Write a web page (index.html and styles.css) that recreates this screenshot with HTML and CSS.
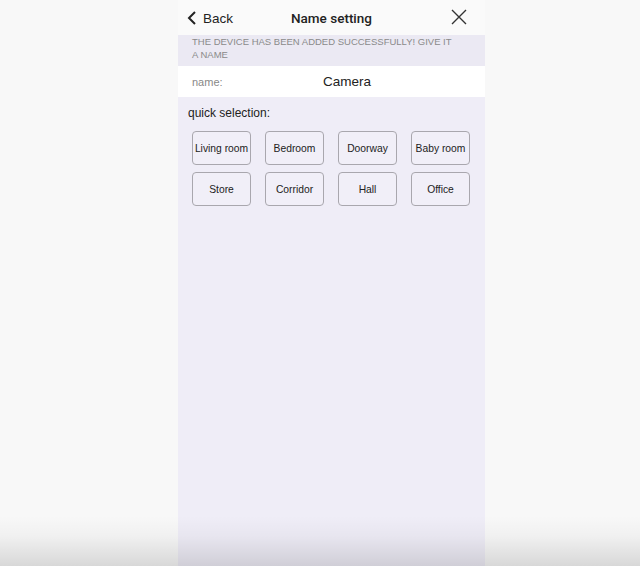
FILE: index.html
```html
<!DOCTYPE html>
<html lang="en">
<head>
  <meta charset="UTF-8">
  <meta name="viewport" content="width=device-width, initial-scale=1.0">
  <title>Name setting</title>
  <link rel="stylesheet" href="styles.css">
</head>
<body>
  <div class="phone">
    <div class="topbar">
      <div class="back">
        <svg width="10" height="14" viewBox="0 0 10 14"><path d="M8 1 L2 7 L8 13" fill="none" stroke="#222" stroke-width="2"/></svg>
        <span>Back</span>
      </div>
      <div class="title">Name setting</div>
      <div class="close">
        <svg width="16" height="16" viewBox="0 0 16 16"><path d="M1 1 L15 15 M15 1 L1 15" fill="none" stroke="#333" stroke-width="1.4"/></svg>
      </div>
    </div>
    <div class="notice">THE DEVICE HAS BEEN ADDED SUCCESSFULLY! GIVE IT A NAME</div>
    <div class="name-row">
      <span class="name-label">name:</span>
      <span class="name-value">Camera</span>
    </div>
    <div class="quick">
      <div class="quick-title">quick selection:</div>
      <div class="grid">
        <button>Living room</button>
        <button>Bedroom</button>
        <button>Doorway</button>
        <button>Baby room</button>
        <button>Store</button>
        <button>Corridor</button>
        <button>Hall</button>
        <button>Office</button>
      </div>
    </div>
  </div>
</body>
</html>
```

FILE: styles.css
```css
html, body { height: 100%; }
body { margin: 0; background: #f8f8f8; font-family: "Liberation Sans", Arial, sans-serif; color: #222; position: relative; overflow: hidden; }
body::after { content: ""; position: absolute; left: 0; right: 0; bottom: 0; height: 50px; background: linear-gradient(to bottom, rgba(0,0,0,0) 0%, rgba(0,0,0,0.03) 40%, rgba(0,0,0,0.13) 100%); pointer-events: none; }
.phone { margin-left: 178px; width: 307px; height: 100%; background: #efedf7; display: flex; flex-direction: column; }
.topbar { height: 35px; background: #fafafa; display: flex; align-items: center; position: relative; }
.back { display: flex; align-items: center; gap: 6px; margin-left: 9px; font-size: 13.5px; margin-top: 1px; }
.title { position: absolute; left: 0; right: 0; text-align: center; font-family: Roboto, "Liberation Sans", sans-serif; font-size: 13.5px; font-weight: 500; pointer-events: none; margin-top: 1px; padding-left: 0; }
.close { margin-left: auto; margin-right: 18px; display: flex; margin-top: -1px; }
.notice { background: #ebe9f3; font-size: 9.5px; color: #8a8a8a; line-height: 13px; padding: 0 30px 5px 14px; height: 26px; }
.name-row { background: #ffffff; height: 31px; display: flex; align-items: center; position: relative; }
.name-label { font-size: 11px; color: #888; margin-left: 14px; }
.name-value { position: absolute; left: 145px; font-size: 13.5px; color: #222; }
.quick { padding: 9px 14px 0 10px; }
.quick-title { font-size: 12px; }
.grid { display: grid; grid-template-columns: repeat(4, 59px); column-gap: 14px; row-gap: 7px; margin-top: 11px; margin-left: 4px; }
.grid button { height: 34px; padding: 0; background: #f1eff8; border: 1px solid #a9a7ae; border-radius: 4px; font-family: "Liberation Sans", Arial, sans-serif; font-size: 10.3px; color: #222; }
```
